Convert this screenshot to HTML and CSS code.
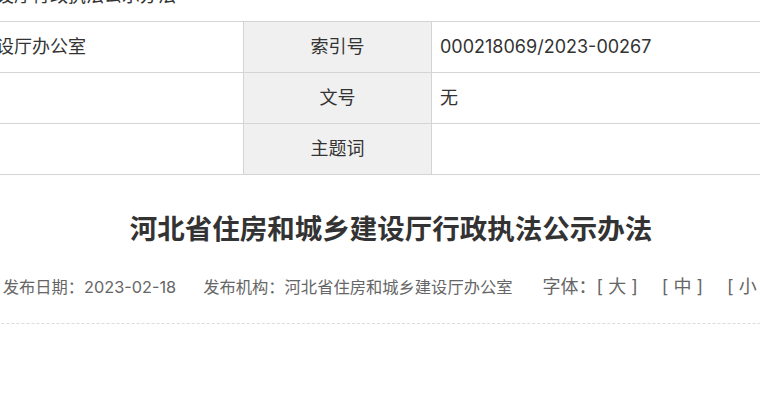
FILE: index.html
```html
<!DOCTYPE html>
<html lang="zh-CN">
<head>
  <meta charset="UTF-8">
  <title>河北省住房和城乡建设厅行政执法公示办法</title>
  <meta name="viewport" content="width=device-width, initial-scale=1.0">
  <link rel="stylesheet" href="styles.css">
</head>
<body>
  <div class="wrap">
    <table class="info-table">
      <colgroup>
        <col class="col-label">
        <col class="col-value">
        <col class="col-label">
        <col class="col-value">
      </colgroup>
      <tr>
        <td class="label">名　称</td>
        <td class="value" colspan="3">河北省住房和城乡建设厅行政执法公示办法</td>
      </tr>
      <tr>
        <td class="label">发布机构</td>
        <td class="value">河北省住房和城乡建设厅办公室</td>
        <td class="label">索引号</td>
        <td class="value">000218069/2023-00267</td>
      </tr>
      <tr>
        <td class="label">发布日期</td>
        <td class="value">2023-02-18</td>
        <td class="label">文号</td>
        <td class="value">无</td>
      </tr>
      <tr>
        <td class="label">主题分类</td>
        <td class="value"></td>
        <td class="label">主题词</td>
        <td class="value"></td>
      </tr>
    </table>

    <div class="article">
      <h1 class="title">河北省住房和城乡建设厅行政执法公示办法</h1>
      <div class="meta">
        <span class="meta-item date">发布日期：2023-02-18</span>
        <span class="meta-item">发布机构：河北省住房和城乡建设厅办公室</span>
        <span class="meta-item font-size">字体：<a class="fs">[ 大 ]</a><a class="fs">[ 中 ]</a><a class="fs">[ 小 ]</a></span>
      </div>
    </div>
  </div>
</body>
</html>
```

FILE: styles.css
```css
body {
  margin: 0;
  overflow: hidden;
  background: #fff;
  font-family: Inter, "Noto Sans CJK SC", sans-serif;
  color: #333;
}

.wrap {
  width: 1600px;
  margin-left: -363px;
}

.info-table {
  width: 1212px;
  margin-top: -30px;
  border-collapse: collapse;
  table-layout: fixed;
  font-size: 18px;
}

.col-label {
  width: 188px;
}

.col-value {
  width: 418px;
}

.info-table td {
  height: 51px;
  padding: 0 8px;
  border: 1px solid #d4d4d4;
  line-height: 24px;
  box-sizing: border-box;
}

.info-table .label {
  text-align: center;
  background-color: #f0f0f0;
}

.info-table .value {
  text-align: left;
}

.article {
  width: 1200px;
  margin-left: 154px;
  padding-bottom: 21px;
  border-bottom: 1px dashed #dcdcdc;
}

.title {
  margin: 34px 0 0;
  font-size: 27.5px;
  line-height: 40px;
  font-weight: bold;
  text-align: center;
  color: #333;
}

.meta {
  display: flex;
  justify-content: center;
  align-items: center;
  gap: 30px;
  margin-top: 23px;
  line-height: 30px;
  font-size: 16.3px;
  color: #666;
}

.meta .date {
  margin-right: -3px;
}

.font-size {
  font-size: 18px;
}

.fs {
  margin-left: 24px;
  cursor: pointer;
}

.fs:first-child {
  margin-left: 0;
}

.fs:last-child {
  margin-right: 11px;
}
```
